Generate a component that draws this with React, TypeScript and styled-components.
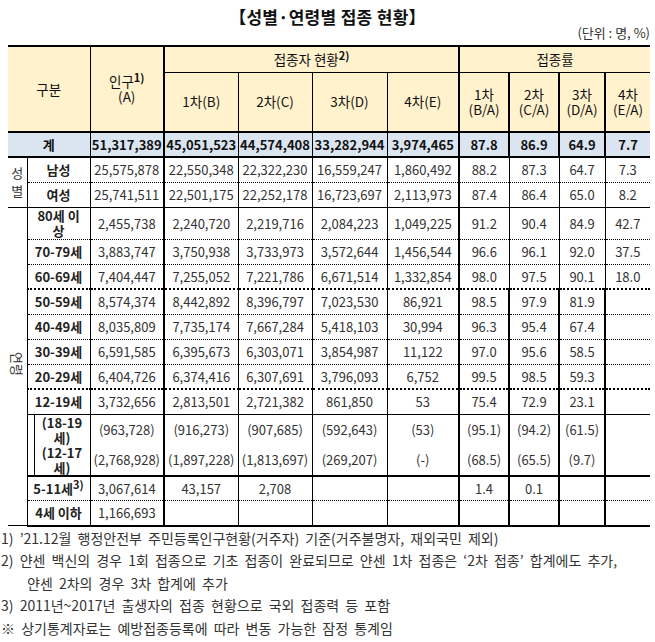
import React from 'react';
import styled, { createGlobalStyle } from 'styled-components';

type Line = 'dot' | 'dotThick' | 'solid' | 'solidThick';

const LINES: Record<Line, string> = {
  dot: '1px dotted #000',
  dotThick: '2px dotted #000',
  solid: '1px solid #000',
  solidThick: '2px solid #000',
};

interface BodyRow {
  label: React.ReactNode;
  values: string[];
  second?: string[];
  line: Line;
  heavy?: boolean;
  height?: number;
}

const sexRows: BodyRow[] = [
  {
    label: '남성',
    values: ['25,575,878', '22,550,348', '22,322,230', '16,559,247', '1,860,492', '88.2', '87.3', '64.7', '7.3'],
    line: 'dot',
  },
  {
    label: '여성',
    values: ['25,741,511', '22,501,175', '22,252,178', '16,723,697', '2,113,973', '87.4', '86.4', '65.0', '8.2'],
    line: 'solid',
  },
];

const Sup = styled('sup')`
  font-size: 11px;
  font-weight: 700;
  line-height: 0;
  vertical-align: 5px;
`;

const ageRows: BodyRow[] = [
  {
    label: (
      <>
        80세 이<br />상
      </>
    ),
    values: ['2,455,738', '2,240,720', '2,219,716', '2,084,223', '1,049,225', '91.2', '90.4', '84.9', '42.7'],
    line: 'dot',
    height: 32,
  },
  {
    label: '70-79세',
    values: ['3,883,747', '3,750,938', '3,733,973', '3,572,644', '1,456,544', '96.6', '96.1', '92.0', '37.5'],
    line: 'dot',
  },
  {
    label: '60-69세',
    values: ['7,404,447', '7,255,052', '7,221,786', '6,671,514', '1,332,854', '98.0', '97.5', '90.1', '18.0'],
    line: 'dotThick',
  },
  {
    label: '50-59세',
    values: ['8,574,374', '8,442,892', '8,396,797', '7,023,530', '86,921', '98.5', '97.9', '81.9', ''],
    line: 'dot',
    heavy: true,
  },
  {
    label: '40-49세',
    values: ['8,035,809', '7,735,174', '7,667,284', '5,418,103', '30,994', '96.3', '95.4', '67.4', ''],
    line: 'dot',
    heavy: true,
  },
  {
    label: '30-39세',
    values: ['6,591,585', '6,395,673', '6,303,071', '3,854,987', '11,122', '97.0', '95.6', '58.5', ''],
    line: 'dot',
    heavy: true,
  },
  {
    label: '20-29세',
    values: ['6,404,726', '6,374,416', '6,307,691', '3,796,093', '6,752', '99.5', '98.5', '59.3', ''],
    line: 'dotThick',
    heavy: true,
  },
  {
    label: '12-19세',
    values: ['3,732,656', '2,813,501', '2,721,382', '861,850', '53', '75.4', '72.9', '23.1', ''],
    line: 'solid',
    heavy: true,
  },
  {
    label: 'sub',
    values: ['(963,728)', '(916,273)', '(907,685)', '(592,643)', '(53)', '(95.1)', '(94.2)', '(61.5)', ''],
    second: ['(2,768,928)', '(1,897,228)', '(1,813,697)', '(269,207)', '(-)', '(68.5)', '(65.5)', '(9.7)', ''],
    line: 'solidThick',
    heavy: true,
    height: 61,
  },
  {
    label: (
      <>
        5-11세<Sup>3)</Sup>
      </>
    ),
    values: ['3,067,614', '43,157', '2,708', '', '', '1.4', '0.1', '', ''],
    line: 'dot',
    heavy: true,
  },
  {
    label: '4세 이하',
    values: ['1,166,693', '', '', '', '', '', '', '', ''],
    line: 'solidThick',
    heavy: true,
  },
];

const total = ['51,317,389', '45,051,523', '44,574,408', '33,282,944', '3,974,465', '87.8', '86.9', '64.9', '7.7'];

const widths = [19, 63, 74, 74, 74, 75, 72, 50, 50, 46, 45];

// left edge of each value column (인구 ~ 4차 접종률)
const leftLine = (i: number, heavy?: boolean) =>
  i === 1 || i === 5 || (heavy && i >= 6) ? LINES.solidThick : LINES.solid;

const GlobalStyle = createGlobalStyle`
  body {
    margin: 0;
    background: #fff;
    font-family: "Noto Sans CJK KR", "Noto Sans", sans-serif;
    color: #333;
  }
`;

export default function App() {
  return (
    <>
      <GlobalStyle />
      <Page>
        <Title>【성별·연령별 접종 현황】</Title>
        <Unit>(단위 : 명, %)</Unit>
        <Table>
          <colgroup>
            {widths.map((w, i) => (
              <col key={i} style={{ width: w }} />
            ))}
          </colgroup>
          <thead>
            <HeadRow $height={26}>
              <HeadCell colSpan={2} rowSpan={2}>
                구분
              </HeadCell>
              <HeadCell rowSpan={2} $left={LINES.solid}>
                인구<Sup>1)</Sup>
                <br />
                (A)
              </HeadCell>
              <HeadCell colSpan={4} $left={LINES.solidThick} $bottom={LINES.solid}>
                접종자 현황<Sup>2)</Sup>
              </HeadCell>
              <HeadCell colSpan={4} $left={LINES.solidThick} $bottom={LINES.solid}>
                접종률
              </HeadCell>
            </HeadRow>
            <HeadRow $height={60}>
              {['1차(B)', '2차(C)', '3차(D)', '4차(E)'].map((t, i) => (
                <HeadCell key={t} $left={i === 0 ? LINES.solidThick : LINES.solid}>
                  {t}
                </HeadCell>
              ))}
              {['B/A', 'C/A', 'D/A', 'E/A'].map((t, i) => (
                <HeadCell key={t} $left={LINES.solidThick}>
                  {i + 1}차
                  <br />({t})
                </HeadCell>
              ))}
            </HeadRow>
          </thead>
          <tbody>
            <TotalRow>
              <TotalCell colSpan={2}>계</TotalCell>
              {total.map((v, i) => (
                <TotalCell key={i} $left={leftLine(i, true)}>
                  {v}
                </TotalCell>
              ))}
            </TotalRow>
            {sexRows.map((row, r) => (
              <DataRow key={r} row={row} side={r === 0 ? <SideCell rowSpan={2}>성<br />별</SideCell> : null} />
            ))}
            {ageRows.map((row, r) => (
              <DataRow
                key={r}
                row={row}
                side={
                  r === 0 ? (
                    <SideCell rowSpan={ageRows.length}>
                      <Rotated>연령</Rotated>
                    </SideCell>
                  ) : null
                }
              />
            ))}
          </tbody>
        </Table>
        <Notes>
          <Note>1) ’21.12월 행정안전부 주민등록인구현황(거주자) 기준(거주불명자, 재외국민 제외)</Note>
          <Note>2) 얀센 백신의 경우 1회 접종으로 기초 접종이 완료되므로 얀센 1차 접종은 ‘2차 접종’ 합계에도 추가,</Note>
          <Note $indent>얀센 2차의 경우 3차 합계에 추가</Note>
          <Note>3) 2011년~2017년 출생자의 접종 현황으로 국외 접종력 등 포함</Note>
          <Note>※ 상기통계자료는 예방접종등록에 따라 변동 가능한 잠정 통계임</Note>
        </Notes>
      </Page>
    </>
  );
}

const DataRow = ({ row, side }: { row: BodyRow; side: React.ReactNode }) => (
  <Row $line={LINES[row.line]} $height={row.height ?? 25}>
    {side}
    {row.label === 'sub' ? (
      <LabelCell>
        <SubLabel>
          <span>
            (18-19
            <br />
            세)
          </span>
          <span>
            (12-17
            <br />
            세)
          </span>
        </SubLabel>
      </LabelCell>
    ) : (
      <LabelCell>{row.label}</LabelCell>
    )}
    {row.values.map((v, i) => (
      <Cell key={i} $left={leftLine(i, row.heavy)}>
        {row.second ? (
          <Pair>
            <span>{v}</span>
            <span>{row.second[i]}</span>
          </Pair>
        ) : (
          v
        )}
      </Cell>
    ))}
  </Row>
);

const Page = styled('div')`
  width: 655px;
`;

const Title = styled('h1')`
  margin: 0;
  padding-top: 7px;
  font-size: 17px;
  font-weight: 700;
  line-height: 20px;
  letter-spacing: 0.3px;
  text-align: center;
  color: #111;
`;

const Unit = styled('div')`
  padding-right: 5px;
  font-size: 13px;
  line-height: 12px;
  text-align: right;
  color: #333;
  margin-bottom: 6px;
`;

const Table = styled('table')`
  margin-left: 8px;
  width: 642px;
  border-collapse: collapse;
  table-layout: fixed;
  font-size: 13px;
  line-height: 15px;
  text-align: center;

  td,
  th {
    padding: 0;
    vertical-align: middle;
  }
`;

const HeadRow = styled('tr')<{ $height: number }>`
  height: ${({ $height }) => $height}px;
  &:first-child > th {
    border-top: 2px solid #000;
  }
`;

const HeadCell = styled('th')<{ $left?: string; $bottom?: string }>`
  background: #fff2cc;
  color: #111;
  font-weight: 400;
  font-size: 13.5px;
  border-left: ${({ $left }) => $left ?? 'none'};
  border-bottom: ${({ $bottom }) => $bottom ?? '2px solid #000'};
`;

const TotalRow = styled('tr')`
  height: 25px;
`;

const TotalCell = styled('td')<{ $left?: string }>`
  background: #dbe5f1;
  color: #111;
  font-weight: 700;
  border-left: ${({ $left }) => $left ?? 'none'};
  border-bottom: 2px solid #000;
`;

const Row = styled('tr')<{ $line: string; $height: number }>`
  height: ${({ $height }) => $height}px;
  & > td:not([rowspan]) {
    border-bottom: ${({ $line }) => $line};
  }
`;

const SideCell = styled('td')`
  border-right: 1px solid #000;
  border-bottom: 1px solid #000;
  color: #333;
  line-height: 18px;
`;

const Rotated = styled('span')`
  display: inline-block;
  writing-mode: vertical-rl;
  text-orientation: sideways;
`;

const LabelCell = styled('td')`
  font-weight: 700;
  color: #222;
`;

const SubLabel = styled('div')`
  margin-left: 6px;
  height: 60px;
  border-left: 1px solid #000;
  display: flex;
  flex-direction: column;
  justify-content: space-around;
`;

const Cell = styled('td')<{ $left: string }>`
  border-left: ${({ $left }) => $left};
  color: #333;
  white-space: nowrap;
`;

const Pair = styled('div')`
  display: flex;
  flex-direction: column;
  gap: 15px;
`;

const Notes = styled('div')`
  padding-left: 1px;
  font-size: 14px;
  line-height: 22.5px;
  word-spacing: 3px;
  color: #333;
`;

const Note = styled('div')<{ $indent?: boolean }>`
  padding-left: ${({ $indent }) => ($indent ? '26px' : '0')};
  white-space: nowrap;
`;
